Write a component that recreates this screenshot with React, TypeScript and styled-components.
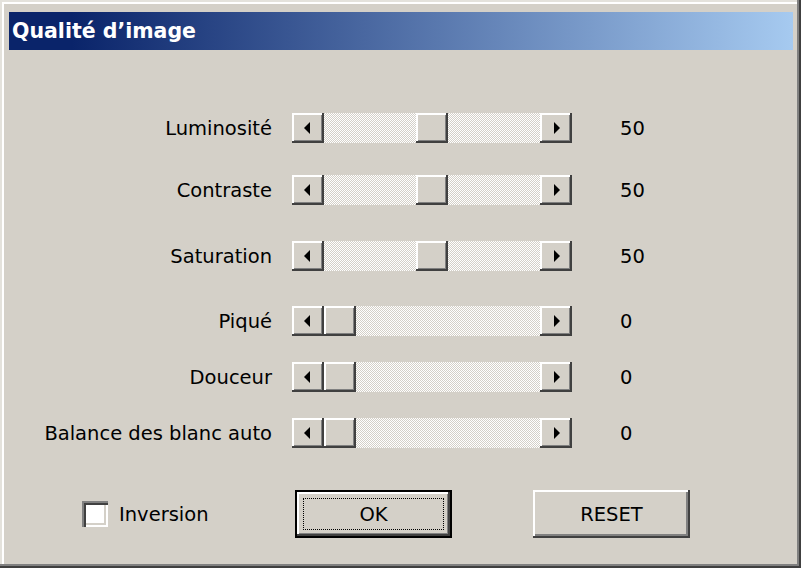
import styled, { createGlobalStyle } from 'styled-components';

const GlobalStyle = createGlobalStyle`
  html, body {
    margin: 0;
    padding: 0;
    background: #d4d0c8;
  }
  body {
    font-family: 'DejaVu Sans', 'Liberation Sans', sans-serif;
  }
`;

interface Setting {
  label: string;
  value: number;
  gap: number;
}

const settings: Setting[] = [
  { label: 'Luminosité', value: 50, gap: 63 },
  { label: 'Contraste', value: 50, gap: 32 },
  { label: 'Saturation', value: 50, gap: 36 },
  { label: 'Piqué', value: 0, gap: 35 },
  { label: 'Douceur', value: 0, gap: 26 },
  { label: 'Balance des blanc auto', value: 0, gap: 26 },
];

const TRACK = 216;
const THUMB = 32;

export default function App() {
  return (
    <>
      <GlobalStyle />
      <Window>
        <TitleBar>Qualité d’image</TitleBar>
        <Rows>
          {settings.map((s) => (
            <Row key={s.label} $gap={s.gap}>
              <Label>{s.label}</Label>
              <ScrollBar>
                <ArrowButton>
                  <Arrow $dir="left" />
                </ArrowButton>
                <Track>
                  <Thumb style={{ left: ((TRACK - THUMB) * s.value) / 100 }} />
                </Track>
                <ArrowButton>
                  <Arrow $dir="right" />
                </ArrowButton>
              </ScrollBar>
              <Value>{s.value}</Value>
            </Row>
          ))}
        </Rows>
        <Footer>
          <CheckField>
            <CheckBox />
            <span>Inversion</span>
          </CheckField>
          <Buttons>
            <PushButton $primary>
              <FocusRing>OK</FocusRing>
            </PushButton>
            <PushButton>RESET</PushButton>
          </Buttons>
        </Footer>
      </Window>
    </>
  );
}

const Window = styled.div`
  height: 568px;
  box-sizing: border-box;
  padding: 12px 8px 8px 9px;
  display: flex;
  flex-direction: column;
  background: #d4d0c8;
  color: #000;
  font-size: 19.5px;
  box-shadow: inset -2px -2px #404040, inset -4px -4px #808080, inset 2px 2px #e4e2dc,
    inset 4px 4px #ffffff;
`;

const TitleBar = styled.div`
  height: 38px;
  display: flex;
  align-items: center;
  padding-left: 3px;
  background: linear-gradient(to right, #0a246a 8%, #a6caf0);
  color: #fff;
  font-weight: bold;
  font-size: 20.5px;
`;

const Rows = styled.div`
  display: flex;
  flex-direction: column;
`;

const Row = styled.div<{ $gap: number }>`
  display: grid;
  grid-template-columns: 263px 280px auto;
  column-gap: 20px;
  align-items: center;
  height: 30px;
  margin-top: ${(p) => p.$gap}px;
`;

const Label = styled.div`
  text-align: right;
  white-space: nowrap;
`;

const Value = styled.div`
  padding-left: 28px;
`;

const ScrollBar = styled.div`
  display: flex;
  height: 30px;
`;

const raised = `
  background: #d4d0c8;
  box-shadow: inset -2px -2px #404040, inset 2px 2px #ffffff, inset -3px -3px #808080;
`;

const ArrowButton = styled.div`
  ${raised}
  width: 32px;
  height: 30px;
  display: flex;
  align-items: center;
  justify-content: center;
`;

const Arrow = styled.span<{ $dir: 'left' | 'right' }>`
  width: 0;
  height: 0;
  border-top: 6px solid transparent;
  border-bottom: 6px solid transparent;
  ${(p) =>
    p.$dir === 'left'
      ? 'border-right: 6px solid #000; margin-left: -2px;'
      : 'border-left: 6px solid #000; margin-left: 2px;'}
`;

const Track = styled.div`
  position: relative;
  width: ${TRACK}px;
  height: 30px;
  background: repeating-conic-gradient(#ffffff 0 25%, #d4d0c8 0 50%) 0 0 / 2px 2px;
`;

const Thumb = styled.div`
  ${raised}
  position: absolute;
  top: 0;
  width: ${THUMB}px;
  height: 30px;
`;

const Footer = styled.div`
  display: flex;
  align-items: center;
  margin-top: 42px;
  padding-left: 73px;
`;

const CheckField = styled.label`
  display: flex;
  align-items: center;
  gap: 11px;
  width: 213px;
`;

const CheckBox = styled.span`
  width: 26px;
  height: 26px;
  box-sizing: border-box;
  background: #fff;
  box-shadow: inset 2px 2px #808080, inset 4px 4px #404040, inset -2px -2px #ffffff,
    inset -4px -4px #d4d0c8;
`;

const Buttons = styled.div`
  display: flex;
  gap: 81px;
`;

const PushButton = styled.div<{ $primary?: boolean }>`
  width: 157px;
  height: 48px;
  box-sizing: border-box;
  display: flex;
  align-items: center;
  justify-content: center;
  background: #d4d0c8;
  ${(p) =>
    p.$primary
      ? 'border: 2px solid #000; padding: 6px; align-items: stretch; box-shadow: inset -2px -2px #404040, inset 2px 2px #ffffff, inset -3px -3px #808080;'
      : 'box-shadow: inset -2px -2px #404040, inset 2px 2px #ffffff, inset -4px -4px #808080;'}
`;

const FocusRing = styled.div`
  flex: 1;
  display: flex;
  align-items: center;
  justify-content: center;
  border: 1px dotted #000;
`;
